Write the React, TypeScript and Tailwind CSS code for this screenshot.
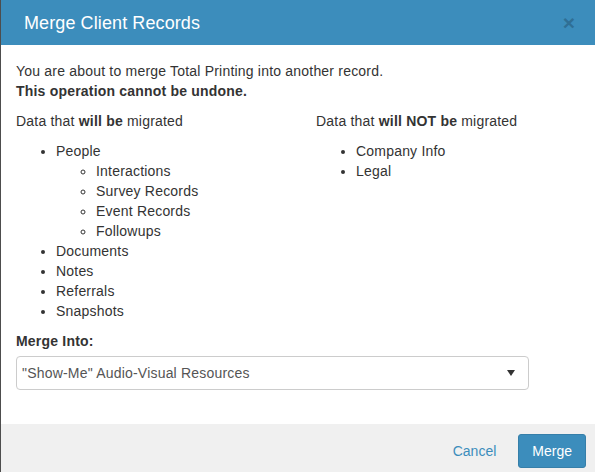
const willMigrate = [
  { label: 'People', children: ['Interactions', 'Survey Records', 'Event Records', 'Followups'] },
  { label: 'Documents' },
  { label: 'Notes' },
  { label: 'Referrals' },
  { label: 'Snapshots' },
];

const wontMigrate = ['Company Info', 'Legal'];

export default function App() {
  return (
    <div className="flex h-[472px] w-[595px] overflow-hidden font-['Liberation_Sans',Arial,sans-serif] text-[14px] leading-[20px] text-[#333]">
      {/* backdrop sliver on the left */}
      <div className="w-px shrink-0 bg-[#4d4d4d]" />

      <div className="flex flex-1 flex-col bg-white">
        <div className="flex h-[45px] shrink-0 items-center bg-[#3c8dbc] pl-[23px] pr-[20px]">
          <h4 className="text-[18px] leading-[20px] tracking-[0.1px] text-white">Merge Client Records</h4>
          <button className="ml-auto text-[21px] font-bold leading-none text-[#2f6f95]">×</button>
        </div>

        <div className="px-[15px] pt-[16px] tracking-[0.2px]">
          <p className="mb-[10px]">
            You are about to merge Total Printing into another record.
            <br />
            <strong>This operation cannot be undone.</strong>
          </p>

          <div className="grid grid-cols-[300px_1fr]">
            <div>
              <p className="mb-[10px]">
                Data that <strong>will be</strong> migrated
              </p>
              <ul className="mb-[10px] list-disc pl-[40px]">
                {willMigrate.map((item) => (
                  <li key={item.label}>
                    {item.label}
                    {item.children && (
                      <ul className="list-[circle] pl-[40px]">
                        {item.children.map((c) => (
                          <li key={c}>{c}</li>
                        ))}
                      </ul>
                    )}
                  </li>
                ))}
              </ul>
            </div>
            <div>
              <p className="mb-[10px]">
                Data that <strong>will NOT be</strong> migrated
              </p>
              <ul className="list-disc pl-[40px]">
                {wontMigrate.map((l) => (
                  <li key={l}>{l}</li>
                ))}
              </ul>
            </div>
          </div>

          <label className="mb-[5px] block font-bold">Merge Into:</label>
          <div className="flex h-[34px] w-[513px] items-center rounded-[4px] border border-[#ccc] pl-[5px] pr-[13px] text-[#555]">
            <span>"Show-Me" Audio-Visual Resources</span>
            <svg className="ml-auto" width="8" height="6" viewBox="0 0 8 6">
              <path d="M0 0h8L4 6z" fill="#333" />
            </svg>
          </div>
        </div>

        <div className="mt-[34px] flex flex-1 items-start justify-end gap-[10px] bg-[#f0f0f0] pr-[9px] pt-[10px]">
          <button className="h-[34px] px-[12px] text-[#3c8dbc]">Cancel</button>
          <button className="h-[34px] rounded-[3px] border border-[#367fa9] bg-[#3c8dbc] px-[13px] text-white">
            Merge
          </button>
        </div>
      </div>
    </div>
  );
}
